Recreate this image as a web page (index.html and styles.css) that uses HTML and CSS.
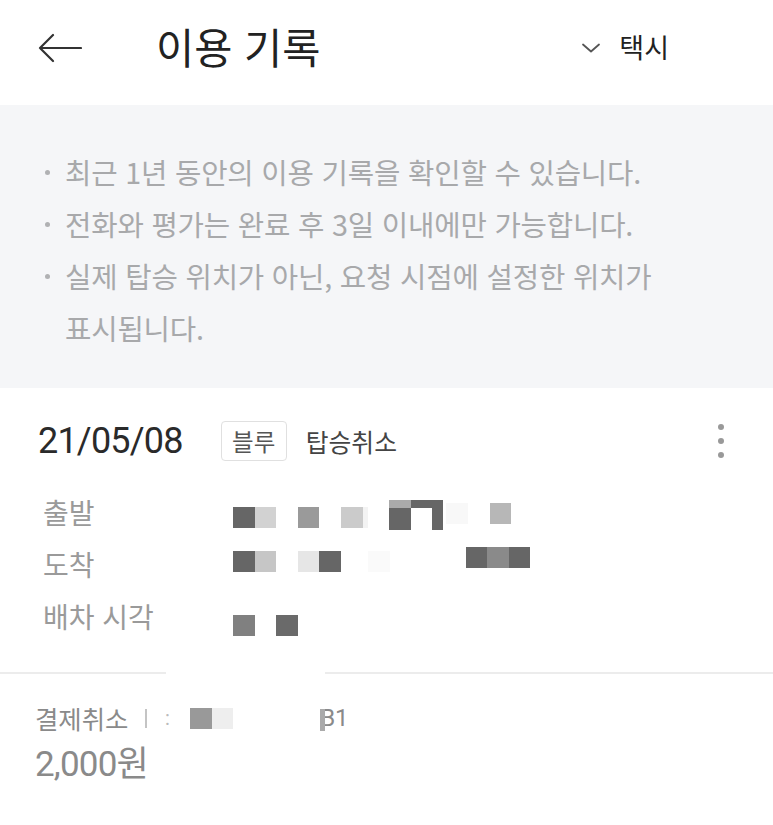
FILE: index.html
```html
<!DOCTYPE html>
<html lang="ko">
<head>
<meta charset="utf-8">
<title>이용 기록</title>
<link rel="stylesheet" href="styles.css">
</head>
<body>
<div class="page">
  <header class="topbar">
    <svg class="back" width="44" height="30" viewBox="0 0 44 30" aria-hidden="true">
      <path d="M15 2 L2 15 L15 28 M2 15 H43" fill="none" stroke="#333" stroke-width="2.2" stroke-linecap="round" stroke-linejoin="round"/>
    </svg>
    <h1 class="title">이용 기록</h1>
    <div class="filter">
      <svg class="chev" width="20" height="10" viewBox="0 0 20 10" aria-hidden="true">
        <path d="M2 1.5 L10 8.5 L18 1.5" fill="none" stroke="#555" stroke-width="1.8" stroke-linecap="round" stroke-linejoin="round"/>
      </svg>
      <span class="filter-label">택시</span>
    </div>
  </header>

  <section class="notice">
    <ul class="notice-list">
      <li>최근 1년 동안의 이용 기록을 확인할 수 있습니다.</li>
      <li>전화와 평가는 완료 후 3일 이내에만 가능합니다.</li>
      <li>실제 탑승 위치가 아닌, 요청 시점에 설정한 위치가<br>표시됩니다.</li>
    </ul>
  </section>

  <section class="record">
    <div class="record-head">
      <span class="date">21/05/08</span>
      <span class="badge">블루</span>
      <span class="status">탑승취소</span>
      <span class="kebab" aria-hidden="true"><i></i><i></i><i></i></span>
    </div>

    <div class="row">
      <span class="label">출발</span>
      <div class="mosaic m1">
        <i class="t dk"></i><i class="t c2"></i><i class="sp"></i><i class="t c9a"></i><i class="sp"></i><i class="t ccb"></i><i class="t f5 narrow"></i><i class="sp"></i>
        <i class="stack"><i class="top aa"></i><i class="bot dk"></i></i><i class="stack"><i class="top dk"></i></i><i class="stack slim"><i class="top dk"></i><i class="bot dk"></i></i>
        <i class="t f8 faint"></i><i class="sp"></i><i class="t cb7 faint"></i>
      </div>
    </div>
    <div class="row">
      <span class="label">도착</span>
      <div class="mosaic m2">
        <i class="t dk"></i><i class="t c6"></i><i class="sp"></i><i class="t e6"></i><i class="t dk"></i><i class="sp27"></i><i class="t fa"></i><i class="sp76"></i>
        <i class="t dk up"></i><i class="t c8a up"></i><i class="t dk up"></i>
      </div>
    </div>
    <div class="row">
      <span class="label">배차 시각</span>
      <div class="mosaic m3">
        <i class="t c80"></i><i class="t gapl c6a"></i>
      </div>
    </div>
  </section>

  <div class="divider"><span class="seg"></span><span class="hole"></span><span class="seg grow"></span></div>

  <section class="pay">
    <div class="pay-line">
      <span class="pay-status">결제취소</span>
      <span class="bar"></span>
      <span class="colon">:</span>
      <i class="pt c99"></i><i class="pt ee"></i>
      <span class="card-no"><i class="mask"></i>B1</span>
    </div>
    <div class="amount">2,000원</div>
  </section>
</div>
</body>
</html>
```

FILE: styles.css
```css
* { box-sizing: border-box; margin: 0; padding: 0; }
html, body { background: #fff; }
body {
  font-family: Roboto, "Noto Sans CJK KR", "Noto Sans", sans-serif;
  color: #222;
  width: 773px;
  overflow: hidden;
}
.page { width: 773px; }

/* header */
.topbar {
  height: 105px;
  display: flex;
  align-items: center;
  padding: 0 0 12px 38px;
}
.back { display: block; flex: none; margin-top: 2px; }
.title {
  font-family: "Noto Sans CJK KR", sans-serif;
  font-weight: 400;
  font-size: 41.5px;
  letter-spacing: 0;
  color: #222;
  margin-left: 74px;
  line-height: 1;
}
.filter {
  margin-left: auto;
  margin-right: 104px;
  display: flex;
  align-items: center;
}
.chev { display: block; margin-right: 18px; margin-top: 2px; }
.filter-label {
  font-family: "Noto Sans CJK KR", sans-serif;
  font-size: 27px;
  color: #222;
  line-height: 1;
}

/* notice */
.notice {
  background: #f5f6f8;
  height: 283px;
  padding-top: 41px;
}
.notice-list { list-style: none; }
.notice-list li {
  position: relative;
  font-family: "Noto Sans CJK KR", sans-serif;
  font-size: 28.7px;
  line-height: 52px;
  color: #a8a9ab;
  padding-left: 65px;
  letter-spacing: -0.2px;
}
.notice-list li::before {
  content: "";
  position: absolute;
  left: 45px;
  top: 24px;
  width: 5px;
  height: 5px;
  border-radius: 50%;
  background: #b0b1b3;
}

/* record */
.record { padding: 33px 0 30px; }
.record-head {
  height: 40px;
  display: flex;
  align-items: center;
  padding-left: 38px;
}
.date {
  font-family: Roboto, sans-serif;
  font-size: 36px;
  color: #2a2a2a;
  letter-spacing: -0.8px;
  line-height: 1;
}
.badge {
  margin-left: 38px;
  height: 40px;
  width: 66px;
  border: 1.5px solid #e0e0e0;
  border-radius: 4px;
  display: flex;
  align-items: center;
  justify-content: center;
  font-family: "Noto Sans CJK KR", sans-serif;
  font-size: 23.5px;
  color: #555;
}
.status {
  margin-left: 19px;
  font-family: "Noto Sans CJK KR", sans-serif;
  font-size: 24.8px;
  color: #444;
}
.kebab {
  margin-left: auto;
  margin-right: 49px;
  display: flex;
  flex-direction: column;
  gap: 8px;
}
.kebab i {
  display: block;
  width: 6px;
  height: 6px;
  border-radius: 50%;
  background: #999;
}

.row {
  height: 52px;
  display: flex;
  padding-left: 43px;
}
.record-head + .row { margin-top: 25px; }
.label {
  width: 190px;
  font-family: "Noto Sans CJK KR", sans-serif;
  font-size: 28px;
  line-height: 52px;
  color: #9a9a9a;
}

/* pixelated redaction mosaics */
.mosaic { display: flex; align-items: flex-start; }
.mosaic i { display: block; flex: none; }
.mosaic .t { width: 21.6px; height: 21px; }
.mosaic .sp { width: 21.6px; height: 1px; }
.mosaic .sp27 { width: 27px; height: 1px; }
.mosaic .sp76 { width: 76px; height: 1px; }
.m1 { padding-top: 14px; }
.m1 .t { margin-top: 7px; }
.m1 .t.faint { margin-top: 3px; }
.m1 .stack { display: flex; flex-direction: column; width: 21.6px; height: 30px; }
.m1 .stack.slim { width: 11px; margin-right: 3px; }
.m1 .stack .top { height: 8px; width: 100%; }
.m1 .stack .bot { height: 22px; width: 100%; }
.m1 .narrow { width: 5px; }
.m2 { padding-top: 13px; }
.m2 .up { margin-top: -4px; }
.m3 { padding-top: 25px; }
.m3 .gapl { margin-left: 21.6px; }

.dk { background: #666; }
.c2 { background: #d2d2d2; }
.c9a { background: #9a9a9a; }
.ccb { background: #cbcbcb; }
.f5 { background: #f3f3f3; }
.aa { background: #aaa; }
.f8 { background: #f8f8f8; }
.cb7 { background: #b7b7b7; }
.c6 { background: #c6c6c6; }
.e6 { background: #e6e6e6; }
.fa { background: #fafafa; }
.c8a { background: #8a8a8a; }
.c80 { background: #808080; }
.c6a { background: #6a6a6a; }
.c99 { background: #999; }
.ee { background: #eee; }

/* divider */
.divider { display: flex; height: 2px; }
.divider .seg { width: 166px; background: #ececec; }
.divider .hole { width: 159px; background: #fff; }
.divider .seg.grow { flex: 1; width: auto; }

/* payment */
.pay { padding: 29px 0 0 35px; }
.pay-line {
  height: 30px;
  display: flex;
  align-items: center;
  font-family: Roboto, "Noto Sans CJK KR", sans-serif;
  font-size: 24px;
  color: #8a8a8a;
}
.pay-status { font-family: "Noto Sans CJK KR", sans-serif; font-size: 25.4px; }
.bar {
  width: 1.5px;
  height: 19px;
  background: #c4c4c4;
  margin-left: 17px;
}
.colon { margin-left: 18px; color: #bbb; width: 6px; overflow: hidden; font-size: 20px; }
.pt { display: block; width: 21.6px; height: 21px; }
.pt.c99 { margin-left: 19px; }
.card-no {
  position: relative;
  margin-left: 87px;
  color: #8a8a8a;
}
.card-no .mask {
  position: absolute;
  left: 0;
  top: 5px;
  width: 5px;
  height: 22px;
  background: #aaa;
}
.amount {
  margin-top: 12px;
  height: 40px;
  line-height: 40px;
  font-family: Roboto, "Noto Sans CJK KR", sans-serif;
  font-size: 35px;
  color: #8a8a8a;
  letter-spacing: -0.8px;
}
```
